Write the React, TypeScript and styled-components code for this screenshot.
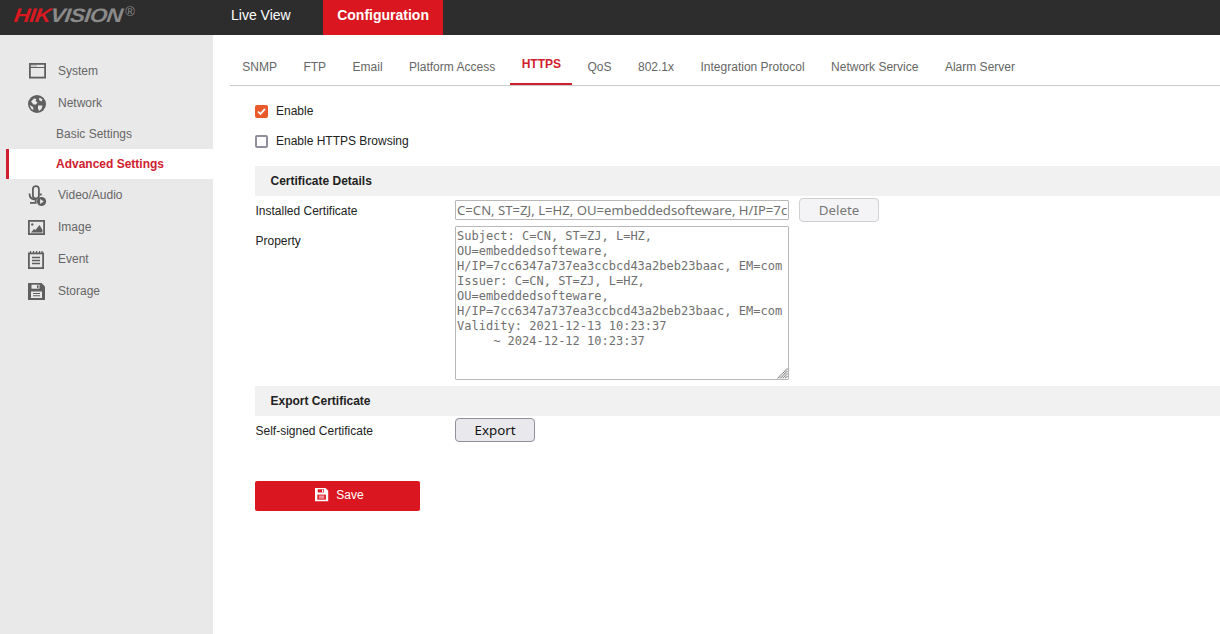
import React from "react";
import styled, { createGlobalStyle } from "styled-components";

const GlobalStyle = createGlobalStyle`
  html, body { margin: 0; padding: 0; height: 100%; background: #fff; overflow: hidden; }
  body { font-family: "Liberation Sans", Arial, sans-serif; font-size: 12px; }
  #root { height: 100%; }
`;

const Page = styled.div`
  display: flex;
  flex-direction: column;
  height: 634px;
`;

const TopBar = styled.header`
  display: flex;
  height: 35px;
  flex: none;
  background: #2d2d2d;
`;

const Logo = styled.div`
  width: 213px;
  padding: 5px 0 0 14px;
  box-sizing: border-box;
  color: #8a8a8a;
  white-space: nowrap;
`;

const LogoWord = styled.span`
  display: inline-block;
  font-size: 19.5px;
  line-height: 20px;
  font-weight: bold;
  font-style: italic;
  letter-spacing: -0.6px;
  transform-origin: left center;
  transform: skewX(-7deg) scaleX(1.15);
`;

const LogoRed = styled.span`
  color: #da1820;
`;

const LogoMark = styled.sup`
  font-size: 13px;
  line-height: 0;
  margin-left: 17px;
  vertical-align: 6px;
`;

const TopLink = styled.a<{ $active?: boolean }>`
  display: flex;
  align-items: center;
  height: 35px;
  padding: ${(p) => (p.$active ? "0 14.5px 5px" : "0 14px 5px")};
  box-sizing: border-box;
  font-size: 14px;
  color: #fff;
  font-weight: ${(p) => (p.$active ? "bold" : "normal")};
  background: ${(p) => (p.$active ? "#da1720" : "transparent")};
  margin-left: ${(p) => (p.$active ? "18px" : "4px")};
`;

const Body = styled.div`
  display: flex;
  flex: 1;
  min-height: 0;
`;

const Sidebar = styled.nav`
  width: 213px;
  flex: none;
  padding-top: 20px;
  box-sizing: border-box;
  background: #e9e9e9;
`;

const MenuItem = styled.div`
  display: flex;
  align-items: center;
  height: 32px;
  padding-left: 28px;
  color: #666;
  svg {
    width: 18px;
    height: 18px;
    margin: 2px 12px 0 0;
    flex: none;
    overflow: visible;
  }
`;

const SubItem = styled.div<{ $active?: boolean }>`
  display: flex;
  align-items: center;
  height: 30px;
  margin-left: 6px;
  padding-left: ${(p) => (p.$active ? "47px" : "50px")};
  border-left: ${(p) => (p.$active ? "3px solid #d0202e" : "none")};
  background: ${(p) => (p.$active ? "#fff" : "transparent")};
  color: ${(p) => (p.$active ? "#d0202e" : "#666")};
  font-weight: ${(p) => (p.$active ? "bold" : "normal")};
`;

const Main = styled.main`
  flex: 1;
  min-width: 0;
`;

const Tabs = styled.div`
  display: flex;
  height: 51px;
  margin-left: 17px;
  box-sizing: border-box;
  border-bottom: 1px solid #c9c9c9;
`;

const Tab = styled.a<{ $active?: boolean }>`
  display: flex;
  align-items: center;
  height: 50px;
  box-sizing: border-box;
  padding: ${(p) => (p.$active ? "10px 11.5px 0 12px" : "14px 13.25px 0")};
  margin: ${(p) => (p.$active ? "0 1.75px 0 1.25px" : "0")};
  color: ${(p) => (p.$active ? "#d0202e" : "#666")};
  font-weight: ${(p) => (p.$active ? "bold" : "normal")};
  border-bottom: ${(p) => (p.$active ? "2px solid #d0202e" : "none")};
  white-space: nowrap;
  &:first-child {
    margin-left: -1px;
  }
`;

const Content = styled.div`
  padding: 10px 0 0 42px;
`;

const CheckRow = styled.label`
  display: flex;
  align-items: center;
  height: 30px;
  color: #222;
`;

const CheckBox = styled.span<{ $checked?: boolean }>`
  display: flex;
  align-items: center;
  justify-content: center;
  width: 13px;
  height: 13px;
  margin: 1px 8px 0 0;
  box-sizing: border-box;
  border-radius: 2px;
  background: ${(p) => (p.$checked ? "#e9592a" : "#fff")};
  border: ${(p) => (p.$checked ? "none" : "2px solid #8f8f9d")};
  svg {
    width: 9px;
    height: 9px;
  }
`;

const SectionTitle = styled.div<{ $top: number }>`
  height: 30px;
  margin-top: ${(p) => p.$top}px;
  padding-left: 15.5px;
  line-height: 30px;
  background: #f1f1f1;
  color: #222;
  font-weight: bold;
`;

const FormRow = styled.div`
  display: flex;
  align-items: flex-start;
`;

const Label = styled.div`
  width: 200px;
  flex: none;
  padding-left: 0.5px;
  box-sizing: border-box;
  color: #222;
  line-height: 30px;
`;

const CertInput = styled.input`
  width: 334px;
  height: 20px;
  margin: 4px 0 0 0;
  padding: 1px;
  box-sizing: border-box;
  border: 1px solid #b8b8b8;
  border-radius: 1px;
  background: #fff;
  color: #707070;
  font-family: "Noto Sans", sans-serif;
  font-size: 13.15px;
  outline: none;
`;

const AreaWrap = styled.div`
  position: relative;
  width: 334px;
  height: 154px;
  margin-bottom: 6px;
`;

const PropertyArea = styled.textarea`
  display: block;
  width: 100%;
  height: 100%;
  margin: 0;
  padding: 2px 1px;
  box-sizing: border-box;
  border: 1px solid #b8b8b8;
  border-radius: 1px;
  background: #fff;
  color: #707070;
  font-family: "DejaVu Sans Mono", monospace;
  font-size: 12px;
  line-height: 15px;
  outline: none;
  resize: none;
  overflow: hidden;
`;

const Grip = styled.svg`
  position: absolute;
  right: 1px;
  bottom: 1px;
  width: 11px;
  height: 11px;
`;

const FormButton = styled.button<{ $disabled?: boolean }>`
  width: 80px;
  height: 24px;
  padding: 0;
  box-sizing: border-box;
  border-radius: 4px;
  font-family: "Noto Sans", sans-serif;
  font-size: 13.33px;
  margin: ${(p) => (p.$disabled ? "2px 0 0 10px" : "2px 0 0 0")};
  border: 1px solid ${(p) => (p.$disabled ? "#cfcfd4" : "#8f8f9d")};
  background: ${(p) => (p.$disabled ? "#f4f4f6" : "#e9e9ed")};
  color: ${(p) => (p.$disabled ? "#777" : "#111")};
`;

const SaveButton = styled.button`
  display: flex;
  align-items: center;
  justify-content: center;
  gap: 7px;
  width: 165px;
  height: 30px;
  margin-top: 35px;
  padding: 0 0 2px 4px;
  border: none;
  border-radius: 2px;
  background: #da1720;
  color: #fff;
  font-family: "Liberation Sans", Arial, sans-serif;
  font-size: 12px;
  svg {
    width: 14px;
    height: 14px;
  }
`;

const ICON = "#5f5f5f";

const SystemIcon = () => (
  <svg viewBox="0 0 18 18">
    <rect x="1.9" y="0.9" width="15.2" height="13.7" fill="none" stroke={ICON} strokeWidth="1.8" />
    <rect x="1" y="4" width="16" height="1" fill={ICON} />
    <rect x="3.5" y="2.4" width="1" height="1" fill={ICON} />
    <rect x="5.5" y="2.4" width="1" height="1" fill={ICON} />
    <rect x="7.5" y="2.4" width="1" height="1" fill={ICON} />
  </svg>
);

const GlobeIcon = () => (
  <svg viewBox="0 0 18 18">
    <circle cx="9" cy="9" r="9" fill={ICON} />
    <path d="M3 6.5l3-3 2.5.5-1 2 2 1.5-1.5 2H5.5zM10 10.5h4.5l-1 3.5-2.5 2-1-2.5zM11.5 2.5l3 2-1 2-2.5-1.5zM1.5 10l3.5 2 .5 3-2-1z" fill="#e9e9e9" />
  </svg>
);

const VideoIcon = () => (
  <svg viewBox="0 0 18 18">
    <rect x="4.9" y="-0.9" width="6" height="12.5" rx="3" fill="none" stroke={ICON} strokeWidth="1.8" />
    <path d="M1.5 6.5c0 3.8 2.2 6 6.2 6v3.3H2" fill="none" stroke={ICON} strokeWidth="1.8" />
    <rect x="11.5" y="6.5" width="2.2" height="2" fill={ICON} />
    <circle cx="13.5" cy="14.5" r="4.6" fill={ICON} />
    <path d="M12.1 12v5l3.7-2.5z" fill="#e9e9e9" />
  </svg>
);

const ImageIcon = () => (
  <svg viewBox="0 0 18 18">
    <rect x="0.9" y="1.9" width="15.2" height="13.2" fill="none" stroke={ICON} strokeWidth="1.8" />
    <circle cx="4.3" cy="5.4" r="1.2" fill={ICON} />
    <path d="M3 13.5l3-3.5 1.5 1L11.5 6l3 5v2.5z" fill={ICON} />
  </svg>
);

const EventIcon = () => (
  <svg viewBox="0 0 18 18">
    <rect x="0.9" y="2.4" width="14.2" height="14.7" fill="none" stroke={ICON} strokeWidth="1.8" />
    <path d="M2.5 0v2M5.5 0v2M8.5 0v2M11.5 0v2M14 0v2" stroke={ICON} strokeWidth="1.2" />
    <path d="M4 6.5h8M4 9.5h8M4 12.5h8" stroke={ICON} strokeWidth="1.3" />
  </svg>
);

const DiskIcon = ({ color = ICON, hole = "#e9e9e9" }: { color?: string; hole?: string }) => (
  <svg viewBox="0 0 18 18">
    <path d="M0 0h13.5L17 3.5V17H0z" fill={color} />
    <rect x="3.5" y="1.7" width="8" height="4" fill={hole} />
    <rect x="9" y="2.2" width="1.5" height="3" fill={color} />
    <rect x="3" y="8.5" width="11" height="6.5" fill={hole} />
    <path d="M5 10.5h7M5 12.8h7" stroke={color} strokeWidth="1.1" />
  </svg>
);

const CheckMark = () => (
  <svg viewBox="0 0 9 9">
    <path d="M1 4.5l2.4 2.5L8 1.8" fill="none" stroke="#fff" strokeWidth="1.8" />
  </svg>
);

const tabs = [
  "SNMP",
  "FTP",
  "Email",
  "Platform Access",
  "HTTPS",
  "QoS",
  "802.1x",
  "Integration Protocol",
  "Network Service",
  "Alarm Server",
];

const certName =
  "C=CN, ST=ZJ, L=HZ, OU=embeddedsofteware, H/IP=7cc6347a737ea3ccbcd43a2beb23baac, EM=com";

const certProps = `Subject: ${certName}
Issuer: ${certName}
Validity: 2021-12-13 10:23:37
     ~ 2024-12-12 10:23:37`;

export default function App() {
  return (
    <Page>
      <GlobalStyle />
      <TopBar>
        <Logo>
          <LogoWord>
            <LogoRed>HIK</LogoRed>VISION
          </LogoWord>
          <LogoMark>®</LogoMark>
        </Logo>
        <TopLink>Live View</TopLink>
        <TopLink $active>Configuration</TopLink>
      </TopBar>
      <Body>
        <Sidebar>
          <MenuItem>
            <SystemIcon />
            System
          </MenuItem>
          <MenuItem>
            <GlobeIcon />
            Network
          </MenuItem>
          <SubItem>Basic Settings</SubItem>
          <SubItem $active>Advanced Settings</SubItem>
          <MenuItem>
            <VideoIcon />
            Video/Audio
          </MenuItem>
          <MenuItem>
            <ImageIcon />
            Image
          </MenuItem>
          <MenuItem>
            <EventIcon />
            Event
          </MenuItem>
          <MenuItem>
            <DiskIcon />
            Storage
          </MenuItem>
        </Sidebar>
        <Main>
          <Tabs>
            {tabs.map((t) => (
              <Tab key={t} $active={t === "HTTPS"}>
                {t}
              </Tab>
            ))}
          </Tabs>
          <Content>
            <CheckRow>
              <CheckBox $checked>
                <CheckMark />
              </CheckBox>
              Enable
            </CheckRow>
            <CheckRow>
              <CheckBox />
              Enable HTTPS Browsing
            </CheckRow>
            <SectionTitle $top={10}>Certificate Details</SectionTitle>
            <FormRow>
              <Label>Installed Certificate</Label>
              <CertInput readOnly value={certName} />
              <FormButton $disabled>Delete</FormButton>
            </FormRow>
            <FormRow>
              <Label>Property</Label>
              <AreaWrap>
                <PropertyArea readOnly value={certProps} />
                <Grip viewBox="0 0 11 11">
                  <path d="M10.5 0.5L0.5 10.5M10.5 3L3 10.5M10.5 5.5L5.5 10.5M10.5 8L8 10.5" fill="none" stroke="#777" strokeWidth="1.1" strokeDasharray="1.2 0.5" />
                </Grip>
              </AreaWrap>
            </FormRow>
            <SectionTitle $top={0}>Export Certificate</SectionTitle>
            <FormRow>
              <Label>Self-signed Certificate</Label>
              <FormButton>Export</FormButton>
            </FormRow>
            <SaveButton>
              <DiskIcon color="#fff" hole="#da1720" />
              Save
            </SaveButton>
          </Content>
        </Main>
      </Body>
    </Page>
  );
}
